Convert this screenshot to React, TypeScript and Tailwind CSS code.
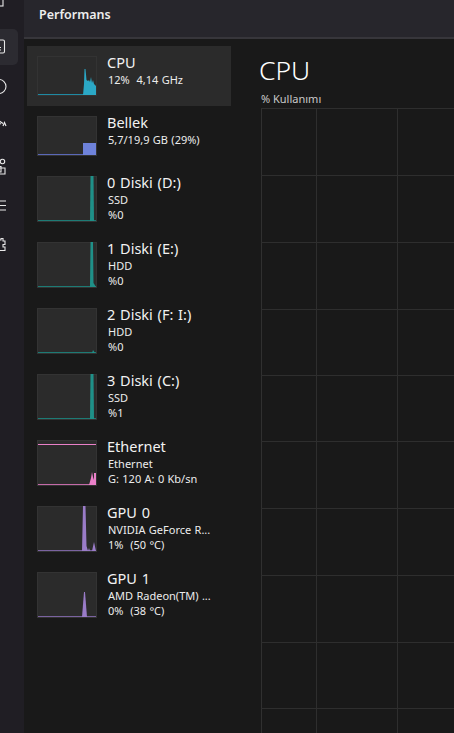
import React from "react";

type Row = {
  title: string;
  lines: string[];
  h: number;
  area: string;
  line: string;
  fill: string;
  extra?: React.ReactNode;
  selected?: boolean;
};

function Thumb({ r }: { r: Row }) {
  const w = 60;
  const h = r.h;
  return (
    <svg width={w} height={h} viewBox={`0 0 ${w} ${h}`} className="shrink-0 block" shapeRendering="crispEdges">
      <rect x="0" y="0" width={w} height={h} fill="#2b2b2b" />
      <rect x="0.5" y="0.5" width={w - 1} height={h - 1} fill="none" stroke="#333333" />
      <rect x="1" y={h - 2} width={w - 2} height="1" fill={r.line} />
      <g shapeRendering="geometricPrecision">
        <path d={r.area} fill={r.fill} />
        {r.extra}
      </g>
    </svg>
  );
}

const rows: Row[] = [
  {
    title: "CPU",
    lines: ["12%  4,14 GHz"],
    h: 40,
    selected: true,
    line: "#1f8aa3",
    fill: "#2ba8c6",
    area: "M46 39 L47 28 L47.5 13 L48.5 13 L49.5 24 L51 25 L52 24 L53 26 L54 21 L55 27 L56 24 L57 28 L59 30 L59 39 Z",
  },
  {
    title: "Bellek",
    lines: ["5,7/19,9 GB (29%)"],
    h: 40,
    line: "#5a68b8",
    fill: "#6e82da",
    area: "M46 27 L59 27 L59 39 L46 39 Z",
  },
  {
    title: "0 Diski (D:)",
    lines: ["SSD", "%0"],
    h: 46,
    line: "#1d7b75",
    fill: "#1f9088",
    area: "M53 45 L53.5 0 L56.5 0 L57 45 Z",
  },
  {
    title: "1 Diski (E:)",
    lines: ["HDD", "%0"],
    h: 46,
    line: "#1d7b75",
    fill: "#1f9088",
    area: "M53 45 L53.5 0 L56 0 L56.5 41 L59 45 Z",
  },
  {
    title: "2 Diski (F: I:)",
    lines: ["HDD", "%0"],
    h: 46,
    line: "#1d7b75",
    fill: "#1f9088",
    area: "M55 45 L56 42 L58 45 Z",
  },
  {
    title: "3 Diski (C:)",
    lines: ["SSD", "%1"],
    h: 46,
    line: "#1d7b75",
    fill: "#1f9088",
    area: "M53 45 L53.5 0 L56.5 0 L57 45 Z",
  },
  {
    title: "Ethernet",
    lines: ["Ethernet", "G: 120 A: 0 Kb/sn"],
    h: 46,
    line: "#c46aa8",
    fill: "#ea80c8",
    area: "M52 45 L54 38 L55 32 L56 37 L57 40 L57 33 L59 33 L59 45 Z",
    extra: <rect x="1" y="4" width="58" height="1" fill="#ea80c8" />,
  },
  {
    title: "GPU 0",
    lines: ["NVIDIA GeForce R...", "1%  (50 °C)"],
    h: 46,
    line: "#7a63a0",
    fill: "#9a7cc8",
    area: "M45 45 L46 0 L48.5 0 L49.5 40 L51 45 Z M51 45 L52 42 L53 45 Z M55 45 L57 36 L59 45 Z",
  },
  {
    title: "GPU 1",
    lines: ["AMD Radeon(TM) ...", "0%  (38 °C)"],
    h: 46,
    line: "#7a63a0",
    fill: "#9a7cc8",
    area: "M45 45 L47 20 L48 20 L50 45 Z",
  },
];

function NavIcon({ children, className }: { children: React.ReactNode; className: string }) {
  return (
    <svg
      width="16"
      height="16"
      viewBox="0 0 16 16"
      fill="none"
      stroke="#e8e8e8"
      strokeWidth="1.1"
      className={`block shrink-0 overflow-visible ${className}`}
    >
      {children}
    </svg>
  );
}

export default function App() {
  const hLines = [0, 67, 134, 200.5, 267, 333, 400, 467, 534, 600];
  const vLines = [55, 136];
  return (
    <div className="flex h-[733px] w-[454px] overflow-hidden bg-[#191919] text-white font-['Noto_Sans',sans-serif]">
      <nav className="w-[24px] shrink-0 bg-[#201e24] flex flex-col relative overflow-hidden">
        <NavIcon className="-mt-[12px]">
          <rect x="-6" y="1" width="9" height="17" />
        </NavIcon>
        <div className="-ml-[6px] mt-[25px] h-[36px] w-[24px] rounded-[5px] bg-[#2c2b31] flex items-center">
          <NavIcon className="">
            <rect x="-2" y="1" width="12.5" height="13" rx="1.5" />
            <path d="M2 8.5 H7 M4 11 H7" />
          </NavIcon>
        </div>
        <NavIcon className="mt-[14px]">
          <circle cx="-1" cy="7.5" r="7" />
          <path d="M-1 4 V7.5 H-4" />
        </NavIcon>
        <NavIcon className="mt-[22px]">
          <path d="M-3 6 L0 4.5 L3 6.5 M-2 8 L1 6.5" />
          <path d="M3 9 L4.5 5.5 L6 9" strokeWidth="1.2" />
        </NavIcon>
        <NavIcon className="mt-[26px]">
          <circle cx="2.5" cy="2.5" r="2.2" />
          <path d="M-4 7.5 H1 V13 H-4 M-1 9 H5 V15 H-1" />
        </NavIcon>
        <NavIcon className="mt-[23px]">
          <path d="M-1 3 H6 M-1 7.5 H6 M-1 12 H6" />
        </NavIcon>
        <NavIcon className="mt-[24px]">
          <path d="M-3 2 H1 V0.5 H3 V3 H5 V6.5 H3 V9 H5 V12.5 H-3" />
        </NavIcon>
      </nav>

      <div className="flex-1 min-w-0 flex flex-col">
        <header className="h-[39px] shrink-0 bg-[#27262c] border-b-2 border-[#37363b] flex items-center pl-[15px]">
          <span className="text-[12.5px] font-semibold text-[#ededed] -mt-[6px]">Performans</span>
        </header>
        <div className="flex flex-1 min-h-0">
          <aside className="w-[204px] shrink-0 ml-[3px] pt-[7px] flex flex-col">
            {rows.map((r) => (
              <div
                key={r.title}
                className={`flex px-[10px] py-[10px] ${r.selected ? "bg-[#2b2b2b]" : ""}`}
              >
                <Thumb r={r} />
                <div className="ml-[10px] -mt-[2px] min-w-0">
                  <div className="text-[14.5px] leading-[17px] text-[#f2f2f2] whitespace-nowrap [word-spacing:1px]">{r.title}</div>
                  {r.lines.map((l) => (
                    <div
                      key={l}
                      className="ml-px text-[11px] leading-[15px] mt-[0.5px] text-[#ececec] whitespace-pre [word-spacing:0.5px]"
                    >
                      {l}
                    </div>
                  ))}
                </div>
              </div>
            ))}
          </aside>
          <main className="flex-1 min-w-0 pl-[30px] pt-[11px] overflow-hidden">
            <h1 className="text-[26.5px] leading-[40px] font-light text-white -ml-[2px]">CPU</h1>
            <div className="text-[11px] leading-[14px] mt-[2px] text-[#c9c9c9]">% Kullanımı</div>
            <svg width="193" height="626" viewBox="0 0 193 626" className="block mt-[2px]" shapeRendering="crispEdges">
              <rect x="0.5" y="0.5" width="300" height="700" fill="none" stroke="#303030" />
              {hLines.map((y) => (
                <line key={y} x1="0" x2="193" y1={y + 0.5} y2={y + 0.5} stroke="#2e2e2e" />
              ))}
              {vLines.map((x) => (
                <line key={x} x1={x + 0.5} x2={x + 0.5} y1="0" y2="626" stroke="#2e2e2e" />
              ))}
            </svg>
          </main>
        </div>
      </div>
    </div>
  );
}
